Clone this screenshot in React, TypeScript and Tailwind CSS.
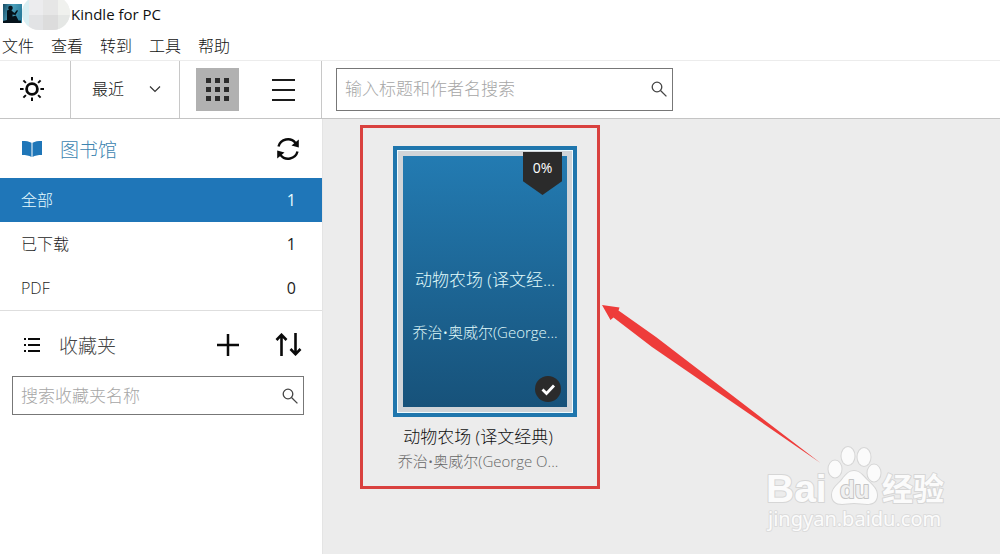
import React from 'react';

const menus = ['文件', '查看', '转到', '工具', '帮助'];

const shelves = [
  { name: '全部', count: 1, active: true },
  { name: '已下载', count: 1, active: false },
  { name: 'PDF', count: 0, active: false },
];

function SearchIcon() {
  return (
    <svg className="w-4 h-4 shrink-0" viewBox="0 0 16 16" fill="none" stroke="#444" strokeWidth="1.3" aria-hidden="true">
      <circle cx="6" cy="6" r="4.8" />
      <path d="M9.5 9.5 15.4 15.4" />
    </svg>
  );
}

function AppIcon() {
  return (
    <svg className="w-[68px] h-[30px]" viewBox="0 0 68 30" aria-hidden="true">
      <defs>
        <linearGradient id="sky" x1="0" y1="0" x2="1" y2="0.3">
          <stop offset="0" stopColor="#174a63" />
          <stop offset="0.5" stopColor="#4b9fba" />
          <stop offset="1" stopColor="#2b7f9e" />
        </linearGradient>
        <clipPath id="blob">
          <rect x="20" y="-4" width="48" height="34" rx="17" />
        </clipPath>
      </defs>
      <rect x="1" y="4" width="19" height="19" fill="url(#sky)" />
      <circle cx="8.5" cy="8" r="2.3" fill="#05131b" />
      <path d="M5 10.5c2-1.500 5-1 5.500 1l2 1.500 2.500-3 1 .8-2.500 4.200-3-.6v2l3.500-1 2.500 5h2.500V23H1v-2l4-1z" fill="#05131b" />
      <g clipPath="url(#blob)">
        <rect x="18" y="-4" width="52" height="34" fill="#f0f1ef" />
        <rect x="18" y="-4" width="9" height="34" fill="#d9eff3" />
        <rect x="27" y="0" width="14" height="15" fill="#ececee" />
        <rect x="27" y="15" width="14" height="15" fill="#e2e3e5" />
        <rect x="41" y="0" width="15" height="15" fill="#e6e6e6" />
        <rect x="41" y="15" width="15" height="15" fill="#dcdcdc" />
        <rect x="56" y="0" width="12" height="15" fill="#f0f1ee" />
        <rect x="56" y="15" width="12" height="15" fill="#e5e7e5" />
      </g>
    </svg>
  );
}

function Toolbar() {
  return (
    <div className="flex h-[59px] border-t border-t-[#ececec] border-b border-b-[#c4c4c4]">
      <button type="button" aria-label="亮度" className="w-[71px] pr-1.5 pb-0.5 border-r border-[#c8c8c8] flex items-center justify-center">
        <svg className="w-6 h-6" viewBox="0 0 24 24" fill="none" stroke="#0a0a0a" aria-hidden="true">
          <circle cx="12" cy="12" r="5.4" strokeWidth="2.8" />
          <path
            strokeWidth="2"
            d="M12 0v3.6M12 20.4V24M0 12h3.6M20.4 12H24M3.4 3.400l2.500 2.500M18.100 18.100l2.500 2.500M3.400 20.600l2.500-2.500M18.100 5.900l2.500-2.500"
          />
        </svg>
      </button>
      <button type="button" className="w-[109px] pl-[21px] pr-[18px] pb-0.5 border-r border-[#c8c8c8] flex items-center justify-between">
        <span>最近</span>
        <svg className="w-3 h-2" viewBox="0 0 12 8" fill="none" stroke="#333" strokeWidth="1.2" aria-hidden="true">
          <path d="M1 1.5 6 6.500 11 1.500" />
        </svg>
      </button>
      <div className="w-[142px] pl-4 pr-4 border-r border-[#c8c8c8] flex items-center justify-between">
        <button type="button" aria-label="网格" className="w-[43px] h-[43px] bg-[#b1b1b1] flex items-center justify-center">
          <svg className="w-[23px] h-[23px]" viewBox="0 0 23 23" fill="#2c2c2c" aria-hidden="true">
            {[0, 9, 18].map((y) => [0, 9, 18].map((x) => <rect key={`${x}-${y}`} x={x} y={y} width="5" height="5" />))}
          </svg>
        </button>
        <button type="button" aria-label="列表" className="w-[43px] h-[43px] flex items-center justify-center">
          <svg className="w-[23px] h-[23px]" viewBox="0 0 23 23" fill="none" stroke="#1c1c1c" strokeWidth="2" aria-hidden="true">
            <path d="M0 2h23M0 12h23M0 22h23" />
          </svg>
        </button>
      </div>
      <label className="ml-3.5 my-[7px] w-[337px] pl-2 pr-[5px] pb-0.5 bg-white border border-[#777] flex items-center">
        <input
          type="text"
          aria-label="搜索图书"
          placeholder="输入标题和作者名搜索"
          className="flex-1 min-w-0 text-[17px] outline-none placeholder:text-[#a6a6a6]"
        />
        <SearchIcon />
      </label>
    </div>
  );
}

function Sidebar() {
  return (
    <aside className="w-[323px] shrink-0 bg-white border-r border-[#e4e4e4]">
      {/* Library */}
      <div className="h-[59px] px-[22px] flex items-center">
        <svg className="w-5 h-4" viewBox="0 0 20 16" fill="#1f76b8" aria-hidden="true">
          <path d="M0 0C4 0 7 .3 9.500 1.800V16C7 14.500 4 14 0 14zM20 0c-4 0-7 .3-9.500 1.800V16c2.500-1.500 5.500-2 9.500-2z" />
        </svg>
        <h2 className="pt-1 ml-[18px] text-[19px] text-[#3c84b0]">图书馆</h2>
        <button type="button" aria-label="同步" className="ml-auto">
          <svg className="w-6 h-6" viewBox="0 0 24 24" fill="none" stroke="#0a0a0a" strokeWidth="2.4" aria-hidden="true">
            <path d="M2.500 9.500A9.700 9.700 0 0 1 19.500 6" />
            <path d="M21.500 14.500A9.700 9.700 0 0 1 4.500 18" />
            <path d="M22.800 2.500v8l-7.300-2zM1.200 21.500v-8l7.300 2z" fill="#0a0a0a" stroke="none" />
          </svg>
        </button>
      </div>
      <ul>
        {shelves.map((shelf) => (
          <li key={shelf.name}>
            <button
              type="button"
              className={
                shelf.active
                  ? 'w-full h-11 pl-[21px] pr-[26px] flex items-center justify-between bg-[#1f76b8] text-[#e6fbff]'
                  : 'w-full h-11 pl-[21px] pr-[26px] flex items-center justify-between text-[#1c1c1c]'
              }
            >
              <span>{shelf.name}</span>
              <span className="font-normal">{shelf.count}</span>
            </button>
          </li>
        ))}
      </ul>

      {/* Collections */}
      <div className="h-[66px] pt-0.5 pl-6 pr-5 border-t border-[#dedede] flex items-center">
        <svg className="w-4 h-4" viewBox="0 0 16 16" stroke="#0a0a0a" strokeWidth="2" aria-hidden="true">
          <path d="M0 2h2M0 8h2M0 14h2M4 2h12M4 8h12M4 14h12" />
        </svg>
        <h2 className="pt-1 ml-[19px] text-[19px] text-[#444]">收藏夹</h2>
        <button type="button" aria-label="新建收藏夹" className="ml-auto">
          <svg className="w-[22px] h-[22px]" viewBox="0 0 22 22" stroke="#0a0a0a" strokeWidth="2.5" aria-hidden="true">
            <path d="M11 0v22M0 11h22" />
          </svg>
        </button>
        <button type="button" aria-label="排序" className="ml-9">
          <svg className="w-[27px] h-[23px]" viewBox="0 0 27 23" fill="none" stroke="#0a0a0a" strokeWidth="2.6" aria-hidden="true">
            <path d="M6.500 23V2M1.500 7l5-5.200 5 5.200M20.500 0v21M15.500 16l5 5.200 5-5.200" />
          </svg>
        </button>
      </div>
      <label className="ml-3 mr-[18px] h-[39px] pl-2 pr-[5px] border border-[#777] flex items-center">
        <input
          type="text"
          aria-label="搜索收藏夹"
          placeholder="搜索收藏夹名称"
          className="flex-1 min-w-0 text-[17px] outline-none placeholder:text-[#a6a6a6]"
        />
        <SearchIcon />
      </label>
    </aside>
  );
}

function Book() {
  return (
    <article className="w-60 h-[364px] pt-[18px] pr-1 border-3 border-[#d9413f] flex flex-col items-center">
      <div className="relative ml-3.5 w-[184px] h-[271px] border-4 border-[#1f76ad] bg-[#d0d4d8]">
        <div className="h-full border border-[#eefbff] p-[5px]">
          <div className="h-full pt-[112px] bg-linear-to-b from-[#237bb2] to-[#17527a] text-center text-[#e0fbfb]">
            <p className="text-[17px] leading-6">动物农场 (译文经...</p>
            <p className="mt-7 text-[15px] leading-6 whitespace-nowrap">乔治•奥威尔(George...</p>
          </div>
        </div>
        <div className="absolute top-[2px] right-[11px] w-[39px] h-[43px] pt-1.5 bg-[#2b2b2b] text-center text-sm font-normal text-white [clip-path:polygon(0_0,100%_0,100%_68%,50%_100%,0_68%)]">
          0%
        </div>
        <svg className="absolute bottom-[11px] right-3 w-[26px] h-[26px]" viewBox="0 0 26 26" fill="none" aria-hidden="true">
          <circle cx="13" cy="13" r="13" fill="#2b2b2b" />
          <path d="M7.500 13.500l4 4L19 9.500" stroke="#fff" strokeWidth="2.8" />
        </svg>
      </div>
      <h3 className="mt-2 text-[17px] leading-6 text-[#111]">动物农场 (译文经典)</h3>
      <p className="text-[15px] leading-6 text-[#666]">乔治•奥威尔(George O...</p>
    </article>
  );
}

function Watermark() {
  return (
    <svg className="absolute right-12 bottom-4 w-[190px] h-[96px]" viewBox="0 0 190 96" aria-label="Baidu 经验">
      <g fill="#fbfbfb" stroke="#d6d6d6" strokeWidth="2" strokeLinejoin="round" paintOrder="stroke">
        <text x="4" y="60" fontFamily="Liberation Sans" fontWeight="700" fontSize="39">Bai</text>
        <ellipse cx="73" cy="27" rx="6.500" ry="8.500" />
        <ellipse cx="86" cy="14" rx="6.500" ry="9" />
        <ellipse cx="102" cy="15" rx="6.500" ry="9" />
        <ellipse cx="112" cy="31" rx="6.500" ry="8.500" />
        <path d="M92 29c6 0 9 5 13 9 6 6 10 9 10 15 0 7-5 9-10 9-4 0-8-1-13-1s-8 1-12 1c-6 0-10-3-10-9s4-9 9-14c4-5 7-10 13-10z" />
        <text x="78" y="56" fontFamily="Liberation Sans" fontWeight="700" fontSize="24" fill="#f0f0f0" stroke="#c4c4c4">du</text>
        <text x="120" y="58" fontFamily="Liberation Sans, Noto Sans CJK SC" fontWeight="700" fontSize="31">经验</text>
        <text x="6" y="84" fontFamily="Noto Sans" fontWeight="400" fontSize="20" stroke="#dcdcdc">jingyan.baidu.com</text>
      </g>
    </svg>
  );
}

export default function App() {
  return (
    <div className="min-h-screen flex flex-col bg-white text-base font-light text-[#111] font-['Open_Sans','Noto_Sans_CJK_SC',sans-serif]">
      <header>
        <div className="h-7 pl-[2px] flex items-start">
          <AppIcon />
          <h1 className="pl-px text-[15px] leading-7 font-normal">Kindle for PC</h1>
        </div>
        <nav className="h-8 pt-1 pl-[2px] flex items-center gap-[17px]">
          {menus.map((menu) => (
            <button key={menu} type="button">{menu}</button>
          ))}
        </nav>
        <Toolbar />
      </header>
      <div className="flex-1 flex">
        <Sidebar />
        <main className="relative flex-1 pt-1.5 pl-[37px] bg-[#ececec]">
          <Book />
          <svg className="absolute left-[279px] top-[186px] w-[220px] h-[160px]" viewBox="0 0 220 160" fill="#ee3c3a" aria-hidden="true">
            <path d="M0 0 17.500 2.500 16.500 5.500 54 32 218.500 158 50 42 11.500 12.500 8.500 15z" />
          </svg>
          <Watermark />
        </main>
      </div>
    </div>
  );
}
